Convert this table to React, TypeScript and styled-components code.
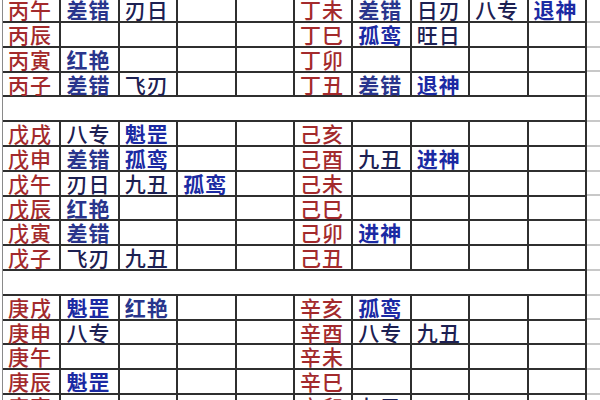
import React from "react";
import styled, { createGlobalStyle } from "styled-components";

type Tone = "stem" | "dark" | "mid" | "vivid";

const GlobalStyle = createGlobalStyle`
  html, body {
    margin: 0;
    padding: 0;
    background: #ffffff;
    overflow: hidden;
  }
  body {
    font-family: "Noto Sans CJK SC", "Noto Sans", sans-serif;
  }
`;

const Page = styled.div`
  display: flex;
  align-items: flex-start;
  width: 600px;
  height: 400px;
  overflow: hidden;
  padding-left: 2px;
  box-sizing: border-box;
`;

const Sheet = styled.div`
  display: grid;
  grid-template-columns: repeat(10, 56.4px);
  grid-auto-rows: 22.8px;
  gap: 2px;
  padding: 2px 2px 2px 0;
  border-left: 1px solid #8a8a8a;
  background: #2f2f2f;
  margin-top: -3.8px;
  flex: none;
`;

const Cell = styled.div<{ $tone?: Tone }>`
  background: #ffffff;
  padding-left: 5px;
  font-size: 21px;
  letter-spacing: 1px;
  line-height: 22px;
  white-space: nowrap;
  font-weight: ${(p) => (p.$tone === "vivid" ? 700 : p.$tone === "mid" ? 600 : 500)};
  color: ${(p) =>
    p.$tone === "stem"
      ? "#a32a2c"
      : p.$tone === "vivid"
      ? "#1b2aa3"
      : p.$tone === "mid"
      ? "#29358c"
      : "#1c2052"};
`;

const Divider = styled.div`
  grid-column: 1 / -1;
  background: #ffffff;
`;

const Gutter = styled.div`
  flex: 1;
  align-self: stretch;
  margin-top: 1.2px;
  background: repeating-linear-gradient(
    to bottom,
    transparent 0 19.8px,
    #c8c8c8 19.8px 21.8px,
    transparent 21.8px 24.8px
  );
`;

const tones: Record<string, Tone> = {
  差错: "mid",
  红艳: "mid",
  孤鸾: "vivid",
  魁罡: "vivid",
  退神: "vivid",
  进神: "vivid",
};

type Row = string[];

// each row: 5 cells of the left pillar, then 5 of the right one
const blocks: Row[][] = [
  [
    ["丙午", "差错", "刃日", "", "", "丁未", "差错", "日刃", "八专", "退神"],
    ["丙辰", "", "", "", "", "丁巳", "孤鸾", "旺日", "", ""],
    ["丙寅", "红艳", "", "", "", "丁卯", "", "", "", ""],
    ["丙子", "差错", "飞刃", "", "", "丁丑", "差错", "退神", "", ""],
  ],
  [
    ["戊戌", "八专", "魁罡", "", "", "己亥", "", "", "", ""],
    ["戊申", "差错", "孤鸾", "", "", "己酉", "九丑", "进神", "", ""],
    ["戊午", "刃日", "九丑", "孤鸾", "", "己未", "", "", "", ""],
    ["戊辰", "红艳", "", "", "", "己巳", "", "", "", ""],
    ["戊寅", "差错", "", "", "", "己卯", "进神", "", "", ""],
    ["戊子", "飞刃", "九丑", "", "", "己丑", "", "", "", ""],
  ],
  [
    ["庚戌", "魁罡", "红艳", "", "", "辛亥", "孤鸾", "", "", ""],
    ["庚申", "八专", "", "", "", "辛酉", "八专", "九丑", "", ""],
    ["庚午", "", "", "", "", "辛未", "", "", "", ""],
    ["庚辰", "魁罡", "", "", "", "辛巳", "", "", "", ""],
    ["庚寅", "", "", "", "", "辛卯", "九丑", "", "", ""],
  ],
];

function toneOf(text: string, col: number): Tone {
  if (col === 0 || col === 5) return "stem";
  return tones[text] ?? "dark";
}

export default function App() {
  return (
    <>
      <GlobalStyle />
      <Page>
        <Sheet>
          {blocks.map((rows, b) => (
            <React.Fragment key={b}>
              {b > 0 && <Divider />}
              {rows.map((row, r) =>
                row.map((text, c) => (
                  <Cell key={`${b}-${r}-${c}`} $tone={toneOf(text, c)}>
                    {text}
                  </Cell>
                ))
              )}
            </React.Fragment>
          ))}
        </Sheet>
        <Gutter />
      </Page>
    </>
  );
}
